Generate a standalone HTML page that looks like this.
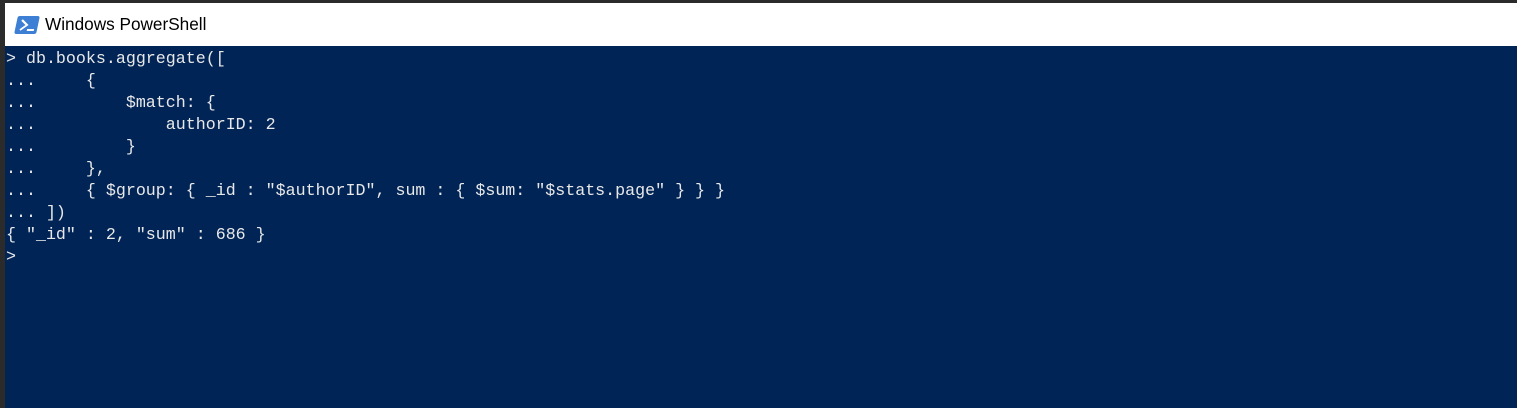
<!DOCTYPE html>
<html><head><style>
body{margin:0;width:1517px;height:408px;background:#2b2b2b;overflow:hidden;position:relative}
.title{position:absolute;left:5px;top:3px;width:1512px;height:43px;background:#fff}
.title span{position:absolute;left:40px;top:11px;font:17.2px "Liberation Sans",sans-serif;color:#000}
.icon{position:absolute;left:11px;top:13px;width:22px;height:18px;background:#3c7fd4;border-radius:2px;transform:skewX(-12deg)}
.con{position:absolute;left:5px;top:46px;width:1512px;height:362px;background:#012456}
pre{margin:0;position:absolute;left:1px;top:2px;font:16.65px/22px "Liberation Mono",monospace;color:#e8e8e8}
</style></head><body>
<div class="title"><div class="icon"><svg width="22" height="18" style="position:absolute;left:2px;top:0"><path d="M3 4 L9 9 L3 14" stroke="#fff" stroke-width="2" fill="none"/><path d="M10 14 H17" stroke="#fff" stroke-width="2"/></svg></div><span>Windows PowerShell</span></div>
<div class="con"><pre>&gt; db.books.aggregate([
...     {
...         $match: {
...             authorID: 2
...         }
...     },
...     { $group: { _id : "$authorID", sum : { $sum: "$stats.page" } } }
... ])
{ "_id" : 2, "sum" : 686 }
&gt;</pre></div>
</body></html>
